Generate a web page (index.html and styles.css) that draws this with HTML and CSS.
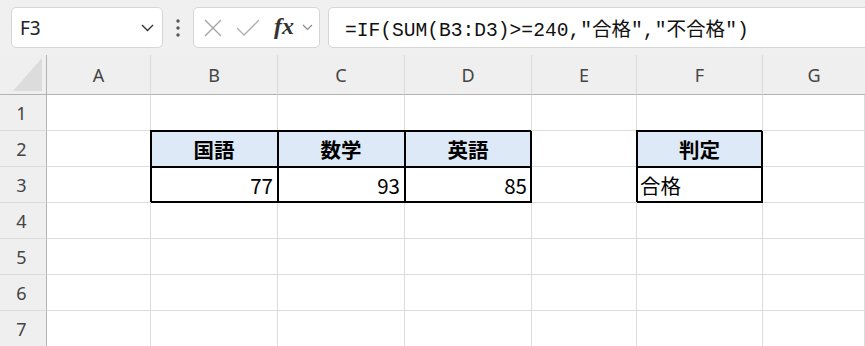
FILE: index.html
```html
<!DOCTYPE html>
<html>
<head>
<meta charset="utf-8">
<title>IF 合格判定</title>
<link rel="stylesheet" href="styles.css">
</head>
<body>

<div class="toolbar">
  <div class="namebox">
    <span class="name">F3</span>
    <svg class="chev" width="13" height="8" viewBox="0 0 13 8"><polyline points="1,1 6.5,6.5 12,1" fill="none" stroke="#333" stroke-width="1.4"/></svg>
  </div>
  <svg class="dots" width="6" height="20" viewBox="0 0 6 20"><circle cx="3" cy="3" r="1.7" fill="#555"/><circle cx="3" cy="10" r="1.7" fill="#555"/><circle cx="3" cy="17" r="1.7" fill="#555"/></svg>
  <div class="fnbox">
    <svg width="18" height="18" viewBox="0 0 18 18"><path d="M1 1 L17 17 M17 1 L1 17" stroke="#a3a3a3" stroke-width="1.3" fill="none"/></svg>
    <svg width="24" height="17" viewBox="0 0 24 17"><polyline points="1,9 8,16 23,1" fill="none" stroke="#b0b0b0" stroke-width="1.3"/></svg>
    <span class="fx">fx</span>
    <svg width="11" height="7" viewBox="0 0 11 7"><polyline points="1,1 5.5,5.5 10,1" fill="none" stroke="#8a8a8a" stroke-width="1.2"/></svg>
  </div>
  <div class="formula">=IF(SUM(B3:D3)&gt;=240,"合格","不合格")</div>
</div>

<div class="sheet">
  <div class="corner"><svg width="30" height="33" viewBox="0 0 30 33"><polygon points="29,0 29,33 0,33" fill="#dcdcdc"/></svg></div>
  <div class="colhd">A</div><div class="colhd">B</div><div class="colhd">C</div><div class="colhd">D</div><div class="colhd">E</div><div class="colhd">F</div><div class="colhd last">G</div>

  <div class="rowhd">1</div>
  <div class="c"></div><div class="c"></div><div class="c"></div><div class="c"></div><div class="c"></div><div class="c"></div><div class="c"></div>

  <div class="rowhd">2</div>
  <div class="c"></div>
  <div class="c box head">国語</div><div class="c box head">数学</div><div class="c box head end">英語</div>
  <div class="c"></div>
  <div class="c box head end">判定</div>
  <div class="c"></div>

  <div class="rowhd">3</div>
  <div class="c"></div>
  <div class="c box num bot">77</div><div class="c box num bot">93</div><div class="c box num end bot">85</div>
  <div class="c"></div>
  <div class="c box txt end bot">合格</div>
  <div class="c"></div>

  <div class="rowhd">4</div>
  <div class="c"></div><div class="c"></div><div class="c"></div><div class="c"></div><div class="c"></div><div class="c"></div><div class="c"></div>

  <div class="rowhd">5</div>
  <div class="c"></div><div class="c"></div><div class="c"></div><div class="c"></div><div class="c"></div><div class="c"></div><div class="c"></div>

  <div class="rowhd">6</div>
  <div class="c"></div><div class="c"></div><div class="c"></div><div class="c"></div><div class="c"></div><div class="c"></div><div class="c"></div>

  <div class="rowhd">7</div>
  <div class="c"></div><div class="c"></div><div class="c"></div><div class="c"></div><div class="c"></div><div class="c"></div><div class="c"></div>
</div>

</body>
</html>
```

FILE: styles.css
```css
body {
  margin: 0;
  background-color: #f0f0f0;
  font-family: "Noto Sans", "Noto Sans CJK JP", sans-serif;
  overflow: hidden;
}

/* toolbar with name box and formula bar */
.toolbar {
  display: flex;
  align-items: center;
  height: 41px;
  padding: 7px 0 7px 11px;
}

.namebox, .fnbox, .formula {
  box-sizing: border-box;
  height: 41px;
  background-color: white;
  border: 1px solid #d6d6d6;
  border-radius: 5px;
  display: flex;
  align-items: center;
}

.namebox {
  width: 152px;
  padding: 0 8px 0 8px;
  justify-content: space-between;
}

.name {
  font-size: 19px;
  color: #222;
}

.dots {
  margin: 0 12px 0 12px;
}

.fnbox {
  width: 127px;
  padding: 0 6px 0 10px;
  gap: 14px;
}
.fnbox svg:last-child {
  margin-left: -6px;
}

.fx {
  font-family: "Liberation Serif", serif;
  font-style: italic;
  font-weight: bold;
  font-size: 24px;
  color: #333;
  margin-top: -3px;
}

.formula {
  flex: 1;
  margin-left: 8px;
  margin-right: -10px;
  padding-left: 16px;
  font-family: "Liberation Mono", "Noto Sans CJK JP", monospace;
  font-size: 19.6px;
  color: #111;
}

/* worksheet grid */
.sheet {
  display: grid;
  grid-template-columns: 47px 104px 127px 127px 127px 105px 126px 1fr;
  grid-template-rows: 40px repeat(7, 36px);
  background-color: white;
}

.corner, .colhd, .rowhd {
  background-color: #efefef;
  color: #444;
  font-size: 18px;
}

.corner {
  border-right: 1px solid #b3b3b3;
  border-bottom: 1px solid #b3b3b3;
  display: flex;
  align-items: flex-end;
  padding: 0 3px 3px 0;
  justify-content: flex-end;
}

.colhd {
  border-right: 1px solid #dadada;
  border-bottom: 1px solid #b3b3b3;
  display: flex;
  align-items: center;
  justify-content: center;
}
.colhd.last {
  border-right: none;
}

.rowhd {
  border-right: 1px solid #b3b3b3;
  border-bottom: 1px solid #dcdcdc;
  display: flex;
  align-items: center;
  justify-content: center;
  padding-right: 3px;
}

.c {
  border-right: 1px solid #dcdcdc;
  border-bottom: 1px solid #dcdcdc;
  display: flex;
  align-items: center;
  font-family: "Noto Sans CJK JP", sans-serif;
  font-size: 20.5px;
  color: #000;
}

/* black ruled table cells, about 2px lines */
.box {
  border-right: 1px solid #000;
  border-bottom: 1px solid #000;
  box-shadow: -1px -1px 0 #000, inset 1px 1px 0 #000;
}
.box.end {
  box-shadow: -1px -1px 0 #000, inset 1px 1px 0 #000, inset -1px 0 0 #000;
}
.box.bot {
  box-shadow: -1px -1px 0 #000, inset 1px 1px 0 #000, inset 0 -1px 0 #000;
}
.box.end.bot {
  box-shadow: -1px -1px 0 #000, inset 1px 1px 0 #000, inset -1px -1px 0 #000;
}

.head {
  background-color: #dde9f6;
  font-weight: bold;
  justify-content: center;
}

.num {
  justify-content: flex-end;
  padding-right: 4px;
}

.txt {
  padding-left: 3px;
}
```
